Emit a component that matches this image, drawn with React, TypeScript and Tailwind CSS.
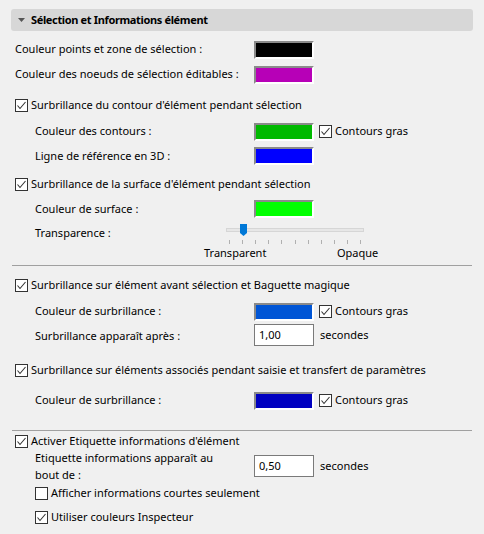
const font = { fontFamily: '"Noto Sans", "Open Sans", sans-serif' };

function Swatch({ color }: { color: string }) {
  return (
    <div className="w-[60px] h-[18px] border-2 border-t-[#8a8a8a] border-l-[#8a8a8a] border-b-white border-r-white">
      <div className="w-full h-full" style={{ backgroundColor: color }} />
    </div>
  );
}

function Check({ checked = true }: { checked?: boolean }) {
  return (
    <span className="w-[13px] h-[13px] border border-[#333333] bg-white flex items-center justify-center shrink-0">
      {checked && (
        <svg width="11" height="11" viewBox="0 0 11 11" fill="none">
          <path d="M1.5 5.5 L4 8.5 L9.5 2" stroke="#333333" strokeWidth="1.1" />
        </svg>
      )}
    </span>
  );
}

function CheckLabel({ label, checked = true }: { label: string; checked?: boolean }) {
  return (
    <div className="flex items-center gap-[3px]">
      <Check checked={checked} />
      <span>{label}</span>
    </div>
  );
}

function ColorRow({
  label,
  color,
  indent,
  bold,
  className,
}: {
  label: string;
  color: string;
  indent?: boolean;
  bold?: boolean;
  className: string;
}) {
  return (
    <div className={`flex items-center ${className}`}>
      <div className={indent ? "w-[219px] pl-[35px] box-content" : "w-[239px] pl-[15px] box-content"}>{label}</div>
      <Swatch color={color} />
      {bold && (
        <div className="ml-[5px]">
          <CheckLabel label="Contours gras" />
        </div>
      )}
    </div>
  );
}

function NumberRow({ label, value, className }: { label: React.ReactNode; value: string; className: string }) {
  return (
    <div className={`flex items-center ${className}`}>
      <div className="w-[219px] pl-[35px] box-content leading-[17px]">{label}</div>
      <div className="w-[60px] h-[22px] bg-white border border-[#7a7a7a] pl-[4px] flex items-center">{value}</div>
      <span className="ml-[6px]">secondes</span>
    </div>
  );
}

function Separator({ className }: { className: string }) {
  return <div className={`mx-[12px] h-px bg-[#a0a0a0] ${className}`} />;
}

export default function App() {
  const ticks = Array.from({ length: 11 }, (_, i) => i);
  return (
    <div className="w-[484px] h-[534px] bg-[#f0f0f0] text-[11px] text-black overflow-hidden" style={font}>
      <div className="mt-[9px] mx-[11px] h-[22px] rounded-[3px] bg-[#d7d7d7] flex items-center">
        <svg width="8" height="5" viewBox="0 0 8 5" className="ml-[7px]">
          <path d="M0 0 H7 L3.5 4 Z" fill="#555555" />
        </svg>
        <span className="ml-[5px] font-bold tracking-[-0.35px]">Sélection et Informations élément</span>
      </div>

      <ColorRow className="mt-[6px] h-[25px]" label="Couleur points et zone de sélection :" color="#000000" />
      <ColorRow className="h-[25px]" label="Couleur des noeuds de sélection éditables :" color="#b700b7" />

      <div className="mt-[6px] h-[25px] flex items-center pl-[15px]">
        <CheckLabel label="Surbrillance du contour d'élément pendant sélection" />
      </div>
      <ColorRow className="mt-[1px] h-[25px]" indent bold label="Couleur des contours :" color="#00b900" />
      <ColorRow className="h-[24px]" indent label="Ligne de référence en 3D :" color="#0000ff" />

      <div className="mt-[4px] h-[24px] flex items-center pl-[15px]">
        <CheckLabel label="Surbrillance de la surface d'élément pendant sélection" />
      </div>
      <ColorRow className="mt-[1px] h-[24px]" indent label="Couleur de surface :" color="#00ff00" />
      <div className="h-[24px] flex items-center">
        <div className="w-[191px] pl-[35px] box-content">Transparence :</div>
        <div className="relative w-[140px] h-[24px]">
          <div className="absolute left-0 top-[7px] w-[138px] h-[4px] bg-[#e7e7e7] border border-[#d6d6d6]" />
          <svg width="8" height="13" viewBox="0 0 8 13" className="absolute left-[14px] top-[3px]">
            <path d="M0 0 H7 V9 L3.5 12 L0 9 Z" fill="#0078d7" />
          </svg>
          {ticks.map((i) => (
            <div key={i} className="absolute top-[19px] w-px h-[4px] bg-[#b0b0b0]" style={{ left: 3 + i * 13.1 }} />
          ))}
        </div>
      </div>
      <div className="h-[16px] flex items-center">
        <span className="ml-[204px] w-[133px]">Transparent</span>
        <span>Opaque</span>
      </div>

      <Separator className="mt-[4px]" />

      <div className="mt-[7px] h-[24px] flex items-center pl-[15px]">
        <CheckLabel label="Surbrillance sur élément avant sélection et Baguette magique" />
      </div>
      <ColorRow className="mt-[2px] h-[25px]" indent bold label="Couleur de surbrillance :" color="#0055d5" />
      <NumberRow className="h-[22px]" label="Surbrillance apparaît après :" value="1,00" />

      <div className="mt-[12px] h-[24px] flex items-center pl-[15px]">
        <CheckLabel label="Surbrillance sur éléments associés pendant saisie et transfert de paramètres" />
      </div>
      <ColorRow className="mt-[6px] h-[25px]" indent bold label="Couleur de surbrillance :" color="#0000c0" />

      <Separator className="mt-[17px]" />

      <div className="mt-[1px] h-[18px] flex items-center pl-[15px]">
        <CheckLabel label="Activer Etiquette informations d'élément" />
      </div>
      <NumberRow
        className="mt-[2px] h-[28px]"
        label={
          <>
            Etiquette informations apparaît au
            <br />
            bout de :
          </>
        }
        value="0,50"
      />
      <div className="mt-[4px] h-[18px] flex items-center pl-[35px]">
        <CheckLabel label="Afficher informations courtes seulement" checked={false} />
      </div>
      <div className="mt-[6px] h-[18px] flex items-center pl-[35px]">
        <CheckLabel label="Utiliser couleurs Inspecteur" />
      </div>
    </div>
  );
}
